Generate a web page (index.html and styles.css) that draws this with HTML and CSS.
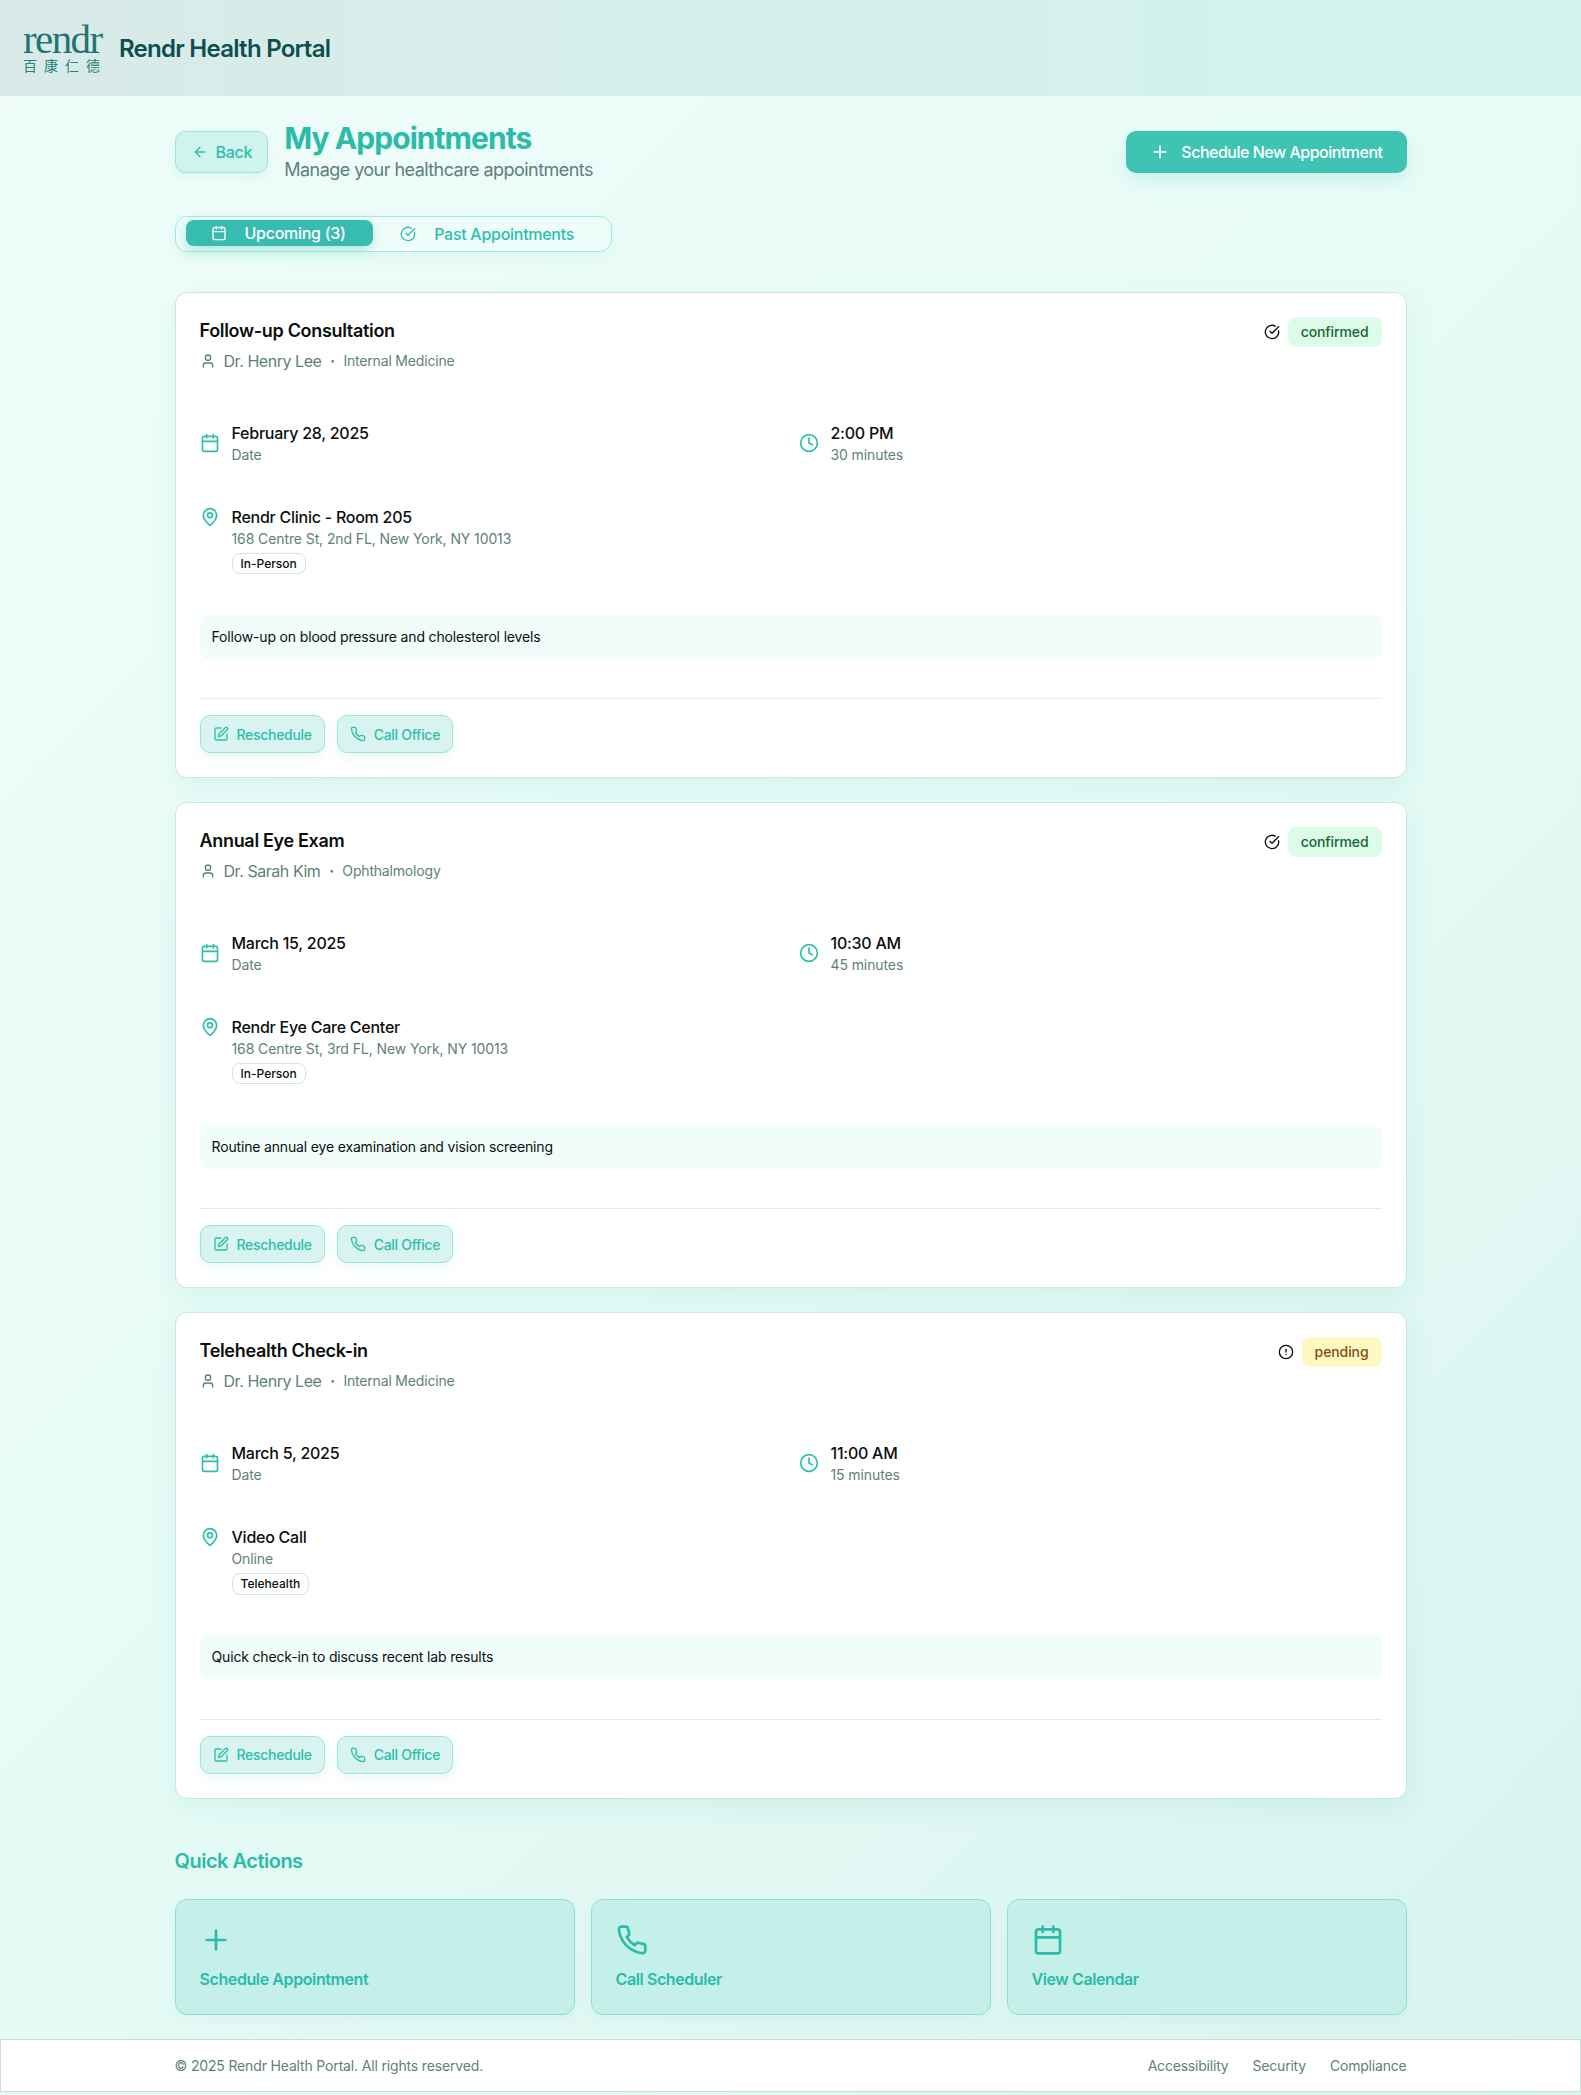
FILE: index.html
```html
<!DOCTYPE html>
<html lang="en">
<head>
  <meta charset="UTF-8">
  <meta name="viewport" content="width=device-width, initial-scale=1.0">
  <title>Rendr Health Portal</title>
  <link rel="stylesheet" href="styles.css">
</head>
<body>
  <!-- Icon sprite -->
  <svg class="sprite" aria-hidden="true">
    <symbol id="i-calendar" viewBox="0 0 24 24"><path d="M8 2v4"/><path d="M16 2v4"/><rect width="18" height="18" x="3" y="4" rx="2"/><path d="M3 10h18"/></symbol>
    <symbol id="i-clock" viewBox="0 0 24 24"><circle cx="12" cy="12" r="10"/><polyline points="12 6 12 12 16 14"/></symbol>
    <symbol id="i-pin" viewBox="0 0 24 24"><path d="M20 10c0 4.993-5.539 10.193-7.399 11.799a1 1 0 0 1-1.202 0C9.539 20.193 4 14.993 4 10a8 8 0 0 1 16 0"/><circle cx="12" cy="10" r="3"/></symbol>
    <symbol id="i-user" viewBox="0 0 24 24"><path d="M19 21v-2a4 4 0 0 0-4-4H9a4 4 0 0 0-4 4v2"/><circle cx="12" cy="7" r="4"/></symbol>
    <symbol id="i-check" viewBox="0 0 24 24"><path d="M21.801 10A10 10 0 1 1 17 3.335"/><path d="m9 11 3 3L22 4"/></symbol>
    <symbol id="i-alert" viewBox="0 0 24 24"><circle cx="12" cy="12" r="10"/><line x1="12" x2="12" y1="8" y2="12"/><line x1="12" x2="12.01" y1="16" y2="16"/></symbol>
    <symbol id="i-pen" viewBox="0 0 24 24"><path d="M12 3H5a2 2 0 0 0-2 2v14a2 2 0 0 0 2 2h14a2 2 0 0 0 2-2v-7"/><path d="M18.375 2.625a1 1 0 0 1 3 3l-9 9a2 2 0 0 1-.853.506l-2.873.84a.5.5 0 0 1-.62-.62l.84-2.873a2 2 0 0 1 .506-.852z"/></symbol>
    <symbol id="i-phone" viewBox="0 0 24 24"><path d="M22 16.92v3a2 2 0 0 1-2.18 2 19.79 19.79 0 0 1-8.63-3.07 19.5 19.5 0 0 1-6-6 19.79 19.79 0 0 1-3.07-8.67A2 2 0 0 1 4.11 2h3a2 2 0 0 1 2 1.72 12.84 12.84 0 0 0 .7 2.81 2 2 0 0 1-.45 2.11L8.09 9.91a16 16 0 0 0 6 6l1.27-1.27a2 2 0 0 1 2.11-.45 12.84 12.84 0 0 0 2.81.7A2 2 0 0 1 22 16.92z"/></symbol>
    <symbol id="i-plus" viewBox="0 0 24 24"><path d="M5 12h14"/><path d="M12 5v14"/></symbol>
    <symbol id="i-back" viewBox="0 0 24 24"><path d="m12 19-7-7 7-7"/><path d="M19 12H5"/></symbol>
  </svg>

  <header class="topbar">
    <div class="logo">
      <span class="logo-word">rendr</span>
      <span class="logo-cjk">百康仁德</span>
    </div>
    <span class="portal-name">Rendr Health Portal</span>
  </header>

  <main class="container">
    <div class="page-head">
      <div class="page-head-left">
        <button class="btn-back"><svg class="icon"><use href="#i-back"/></svg>Back</button>
        <div>
          <h1>My Appointments</h1>
          <p class="subtitle">Manage your healthcare appointments</p>
        </div>
      </div>
      <button class="btn-primary"><svg class="icon icon-md"><use href="#i-plus"/></svg>Schedule New Appointment</button>
    </div>

    <div class="tabs">
      <div class="tab active"><svg class="icon"><use href="#i-calendar"/></svg>Upcoming (3)</div>
      <div class="tab"><svg class="icon"><use href="#i-check"/></svg>Past Appointments</div>
    </div>

    <!-- Appointment cards -->
    <section class="card">
      <div class="card-head">
        <div>
          <h3>Follow-up Consultation</h3>
          <div class="doctor"><svg class="icon"><use href="#i-user"/></svg><span>Dr. Henry Lee</span><span class="dot">·</span><span class="specialty">Internal Medicine</span></div>
        </div>
        <div class="status"><svg class="icon"><use href="#i-check"/></svg><span class="status-pill confirmed">confirmed</span></div>
      </div>
      <div class="details">
        <div class="detail center"><svg class="icon icon-md teal"><use href="#i-calendar"/></svg><div><div class="strong">February 28, 2025</div><div class="muted">Date</div></div></div>
        <div class="detail center"><svg class="icon icon-md teal"><use href="#i-clock"/></svg><div><div class="strong">2:00 PM</div><div class="muted">30 minutes</div></div></div>
        <div class="detail"><svg class="icon icon-md teal pin"><use href="#i-pin"/></svg><div><div class="strong">Rendr Clinic - Room 205</div><div class="muted">168 Centre St, 2nd FL, New York, NY 10013</div><span class="type">In-Person</span></div></div>
      </div>
      <div class="notes">Follow-up on blood pressure and cholesterol levels</div>
      <div class="actions">
        <button class="btn-small"><svg class="icon"><use href="#i-pen"/></svg>Reschedule</button>
        <button class="btn-small"><svg class="icon"><use href="#i-phone"/></svg>Call Office</button>
      </div>
    </section>

    <section class="card">
      <div class="card-head">
        <div>
          <h3>Annual Eye Exam</h3>
          <div class="doctor"><svg class="icon"><use href="#i-user"/></svg><span>Dr. Sarah Kim</span><span class="dot">·</span><span class="specialty">Ophthalmology</span></div>
        </div>
        <div class="status"><svg class="icon"><use href="#i-check"/></svg><span class="status-pill confirmed">confirmed</span></div>
      </div>
      <div class="details">
        <div class="detail center"><svg class="icon icon-md teal"><use href="#i-calendar"/></svg><div><div class="strong">March 15, 2025</div><div class="muted">Date</div></div></div>
        <div class="detail center"><svg class="icon icon-md teal"><use href="#i-clock"/></svg><div><div class="strong">10:30 AM</div><div class="muted">45 minutes</div></div></div>
        <div class="detail"><svg class="icon icon-md teal pin"><use href="#i-pin"/></svg><div><div class="strong">Rendr Eye Care Center</div><div class="muted">168 Centre St, 3rd FL, New York, NY 10013</div><span class="type">In-Person</span></div></div>
      </div>
      <div class="notes">Routine annual eye examination and vision screening</div>
      <div class="actions">
        <button class="btn-small"><svg class="icon"><use href="#i-pen"/></svg>Reschedule</button>
        <button class="btn-small"><svg class="icon"><use href="#i-phone"/></svg>Call Office</button>
      </div>
    </section>

    <section class="card">
      <div class="card-head">
        <div>
          <h3>Telehealth Check-in</h3>
          <div class="doctor"><svg class="icon"><use href="#i-user"/></svg><span>Dr. Henry Lee</span><span class="dot">·</span><span class="specialty">Internal Medicine</span></div>
        </div>
        <div class="status"><svg class="icon"><use href="#i-alert"/></svg><span class="status-pill pending">pending</span></div>
      </div>
      <div class="details">
        <div class="detail center"><svg class="icon icon-md teal"><use href="#i-calendar"/></svg><div><div class="strong">March 5, 2025</div><div class="muted">Date</div></div></div>
        <div class="detail center"><svg class="icon icon-md teal"><use href="#i-clock"/></svg><div><div class="strong">11:00 AM</div><div class="muted">15 minutes</div></div></div>
        <div class="detail"><svg class="icon icon-md teal pin"><use href="#i-pin"/></svg><div><div class="strong">Video Call</div><div class="muted">Online</div><span class="type">Telehealth</span></div></div>
      </div>
      <div class="notes">Quick check-in to discuss recent lab results</div>
      <div class="actions">
        <button class="btn-small"><svg class="icon"><use href="#i-pen"/></svg>Reschedule</button>
        <button class="btn-small"><svg class="icon"><use href="#i-phone"/></svg>Call Office</button>
      </div>
    </section>

    <!-- Quick actions -->
    <h2 class="quick-title">Quick Actions</h2>
    <div class="quick-grid">
      <div class="quick-card"><svg class="icon icon-lg"><use href="#i-plus"/></svg><span>Schedule Appointment</span></div>
      <div class="quick-card"><svg class="icon icon-lg"><use href="#i-phone"/></svg><span>Call Scheduler</span></div>
      <div class="quick-card"><svg class="icon icon-lg"><use href="#i-calendar"/></svg><span>View Calendar</span></div>
    </div>
  </main>

  <footer class="footer">
    <div class="footer-inner">
      <span>© 2025 Rendr Health Portal. All rights reserved.</span>
      <nav class="footer-links"><a>Accessibility</a><a>Security</a><a>Compliance</a></nav>
    </div>
  </footer>
</body>
</html>
```

FILE: styles.css
```css
* {
  box-sizing: border-box;
}
body {
  margin: 0;
  font-family: Inter, "Noto Sans", sans-serif;
  font-size: 16px;
  line-height: 24px;
  color: #0a0f0e;
  background: linear-gradient(135deg, #f0fdfa 0%, #e6fbf6 50%, #d9f3ee 100%);
}
button {
  font-family: inherit;
}
.sprite {
  display: none;
}
.icon {
  width: 16px;
  height: 16px;
  flex: none;
  fill: none;
  stroke: currentColor;
  stroke-width: 2;
  stroke-linecap: round;
  stroke-linejoin: round;
}
.icon-md {
  width: 20px;
  height: 20px;
}
.icon-lg {
  width: 32px;
  height: 32px;
}
.teal {
  color: #2dbfab;
}

/* Header */
.topbar {
  height: 96px;
  padding: 0 24px 0 23px;
  display: flex;
  align-items: center;
  gap: 16px;
  background: linear-gradient(90deg, #d8eae7 0%, #d2f4ed 100%);
}
.logo {
  width: 80px;
  display: flex;
  flex-direction: column;
  color: #1f7474;
}
.logo-word {
  font-family: "Liberation Serif", serif;
  font-size: 41px;
  line-height: 31px;
  letter-spacing: -1.6px;
}
.logo-cjk {
  font-family: "Noto Sans CJK SC", sans-serif;
  font-size: 14px;
  font-weight: 400;
  line-height: 16px;
  letter-spacing: 7px;
  margin-top: 2px;
  white-space: nowrap;
  color: #2a7f7f;
}
.portal-name {
  margin-top: 2px;
  font-size: 24px;
  line-height: 28px;
  font-weight: 600;
  letter-spacing: -0.74px;
  color: #0d4f4f;
}

/* Page heading */
.container {
  max-width: 1280px;
  margin: 0 auto;
  padding: 24px 24px 24px;
}
.page-head {
  display: flex;
  justify-content: space-between;
  align-items: center;
  margin-bottom: 32px;
}
.page-head-left {
  display: flex;
  align-items: center;
  gap: 16px;
}
h1 {
  margin: 0;
  font-size: 30px;
  line-height: 36px;
  font-weight: 700;
  letter-spacing: -0.95px;
  color: #2bbba8;
}
.subtitle {
  margin: 0;
  font-size: 18px;
  line-height: 28px;
  letter-spacing: -0.55px;
  color: #5f7f7a;
}
.btn-back {
  height: 42px;
  padding: 0 15px 0 16px;
  display: flex;
  align-items: center;
  gap: 8px;
  font-size: 16px;
  font-weight: 500;
  letter-spacing: -0.25px;
  color: #2dbfab;
  background: #cff3ed;
  border: 1px solid #9fe6da;
  border-radius: 10px;
  box-shadow: 0 4px 12px rgba(45, 191, 171, 0.1);
}
.btn-primary {
  height: 42px;
  padding: 0 24px;
  display: flex;
  align-items: center;
  gap: 11px;
  font-size: 16px;
  font-weight: 500;
  letter-spacing: -0.5px;
  color: #fff;
  background: #3fc4b3;
  border: none;
  border-radius: 10px;
  box-shadow: 0 8px 16px rgba(45, 191, 171, 0.15);
}

/* Tabs */
.tabs {
  width: 437px;
  height: 36px;
  margin-bottom: 40px;
  padding: 3px 10px 5px;
  display: flex;
  align-items: flex-start;
  gap: 3px;
  background: rgba(240, 253, 250, 0.8);
  border: 1px solid #a3e9dd;
  border-radius: 12px;
  box-shadow: 0 6px 14px rgba(45, 191, 171, 0.08);
}
.tab {
  height: 26px;
  padding: 0 24.5px;
  display: flex;
  align-items: center;
  gap: 18px;
  font-weight: 500;
  letter-spacing: -0.28px;
  color: #2dbfab;
  border-radius: 8px;
  white-space: nowrap;
}
.tab:last-child {
  margin-top: 1px;
}
.tab.active {
  padding: 0 27px 0 25px;
  color: #fff;
  background: #38bbb0;
  box-shadow: 0 4px 12px rgba(45, 191, 171, 0.35);
}

/* Appointment card */
.card {
  margin-bottom: 24px;
  padding: 24px;
  background: #fff;
  border: 1px solid #d0e3e0;
  border-radius: 12px;
  box-shadow: 0 8px 24px rgba(45, 191, 171, 0.1);
}
.card-head {
  display: flex;
  justify-content: space-between;
  align-items: flex-start;
  margin-bottom: 48px;
}
h3 {
  margin: 0 0 4px;
  font-size: 18px;
  line-height: 28px;
  font-weight: 600;
  letter-spacing: -0.32px;
}
.doctor {
  display: flex;
  align-items: center;
  gap: 8px;
  letter-spacing: -0.45px;
  color: #5f7f7a;
}
.dot {
  margin: 0 0.5px;
  font-weight: 700;
}
.specialty {
  font-size: 14px;
  letter-spacing: -0.18px;
}
.status {
  display: flex;
  align-items: center;
  gap: 8px;
}
.status-pill {
  height: 30px;
  padding: 0 13px;
  display: flex;
  align-items: center;
  font-size: 14px;
  font-weight: 500;
  letter-spacing: -0.1px;
  border-radius: 8px;
}
.confirmed {
  color: #166534;
  background: #dcfce7;
}
.pending {
  color: #854d0e;
  background: #fef9c3;
}
.details {
  display: grid;
  grid-template-columns: 1fr 1fr;
  gap: 40px 16px;
  margin-bottom: 40.3px;
}
.detail {
  display: flex;
  align-items: flex-start;
  gap: 12px;
}
.detail.center {
  align-items: center;
}
.pin {
  margin-top: 2px;
}
.strong {
  font-weight: 500;
  letter-spacing: -0.25px;
}
.muted {
  font-size: 14px;
  line-height: 20px;
  letter-spacing: -0.1px;
  color: #5f7f7a;
}
.type {
  display: table;
  margin-top: 4px;
  height: 21.2px;
  padding: 0 8px;
  font-size: 12px;
  line-height: 19.2px;
  font-weight: 500;
  border: 1px solid #d5e3e1;
  border-radius: 8px;
}
.notes {
  margin-bottom: 39.7px;
  padding: 12px;
  font-size: 14px;
  line-height: 20px;
  letter-spacing: -0.16px;
  background: #f0fdfa;
  border-radius: 8px;
}
.actions {
  padding-top: 16px;
  display: flex;
  gap: 12px;
  border-top: 1px solid #e5ebea;
}
.btn-small {
  height: 38px;
  padding: 0 12px;
  display: flex;
  align-items: center;
  gap: 8px;
  font-size: 14px;
  font-weight: 500;
  letter-spacing: -0.3px;
  color: #2dbfab;
  background: #d9f4f0;
  border: 1px solid #9de4da;
  border-radius: 10px;
  box-shadow: 0 4px 12px rgba(45, 191, 171, 0.1);
}

/* Quick actions */
.quick-title {
  margin: 48px 0 24px;
  font-size: 20px;
  line-height: 28px;
  font-weight: 600;
  letter-spacing: -0.5px;
  color: #2bbba8;
}
.quick-grid {
  display: grid;
  grid-template-columns: repeat(3, 1fr);
  gap: 16px;
}
.quick-card {
  padding: 24px 24px 23px;
  display: flex;
  flex-direction: column;
  align-items: flex-start;
  gap: 11px;
  font-weight: 600;
  letter-spacing: -0.4px;
  color: #2bbba8;
  background: #c4f0e9;
  border: 1px solid #8fe0d3;
  border-radius: 12px;
  box-shadow: 0 4px 12px rgba(45, 191, 171, 0.06);
}

/* Footer */
.footer {
  margin-bottom: 3.4px;
  background: #fff;
  border: 1px solid #c8dedb;
}
.footer-inner {
  max-width: 1280px;
  height: 51px;
  margin: 0 auto;
  padding: 2px 24px 0;
  display: flex;
  justify-content: space-between;
  align-items: center;
  font-size: 14px;
  letter-spacing: -0.16px;
  color: #5f7f7a;
}
.footer-links {
  display: flex;
  gap: 24px;
  letter-spacing: -0.2px;
}
```
